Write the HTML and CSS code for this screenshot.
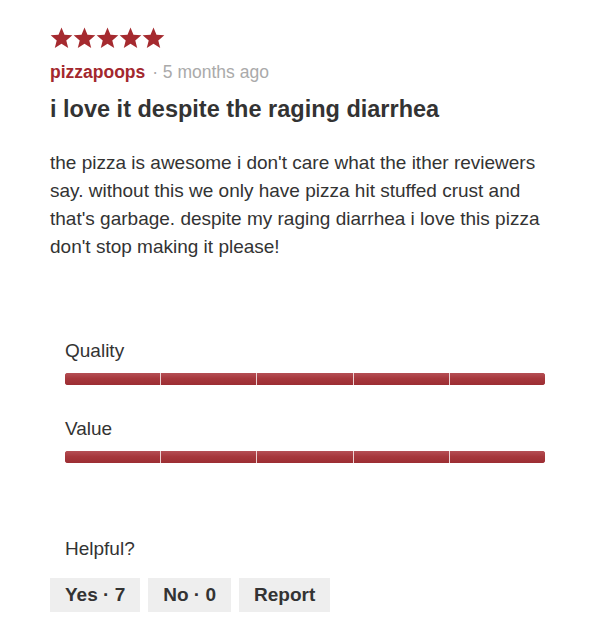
FILE: index.html
```html
<!DOCTYPE html>
<html>
<head>
    <title>Review</title>
    <link rel="stylesheet" href="styles.css">
</head>
<body>
    <div class="review">
        <!-- star rating -->
        <div class="stars">
            <svg viewBox="0 0 24 24"><path d="M12 1.5l3.1 7.6 8.2.6-6.3 5.3 2 8-7-4.4-7 4.4 2-8L.7 9.7l8.2-.6z"/></svg>
            <svg viewBox="0 0 24 24"><path d="M12 1.5l3.1 7.6 8.2.6-6.3 5.3 2 8-7-4.4-7 4.4 2-8L.7 9.7l8.2-.6z"/></svg>
            <svg viewBox="0 0 24 24"><path d="M12 1.5l3.1 7.6 8.2.6-6.3 5.3 2 8-7-4.4-7 4.4 2-8L.7 9.7l8.2-.6z"/></svg>
            <svg viewBox="0 0 24 24"><path d="M12 1.5l3.1 7.6 8.2.6-6.3 5.3 2 8-7-4.4-7 4.4 2-8L.7 9.7l8.2-.6z"/></svg>
            <svg viewBox="0 0 24 24"><path d="M12 1.5l3.1 7.6 8.2.6-6.3 5.3 2 8-7-4.4-7 4.4 2-8L.7 9.7l8.2-.6z"/></svg>
        </div>
        <div class="byline">
            <span class="author">pizzapoops</span>
            <span class="when">&middot; 5 months ago</span>
        </div>
        <h2 class="title">i love it despite the raging diarrhea</h2>
        <p class="body-text">the pizza is awesome i don't care what the ither reviewers say. without this we only have pizza hit stuffed crust and that's garbage. despite my raging diarrhea i love this pizza don't stop making it please!</p>

        <div class="ratings">
            <div class="rating">
                <div class="rating-label">Quality</div>
                <div class="bar">
                    <span></span><span></span><span></span><span></span><span></span>
                </div>
            </div>
            <div class="rating">
                <div class="rating-label">Value</div>
                <div class="bar">
                    <span></span><span></span><span></span><span></span><span></span>
                </div>
            </div>
        </div>

        <div class="helpful">Helpful?</div>
        <div class="actions">
            <button class="btn">Yes &middot; 7</button>
            <button class="btn">No &middot; 0</button>
            <button class="btn">Report</button>
        </div>
    </div>
</body>
</html>
```

FILE: styles.css
```css
body {
    margin: 0;
    padding: 0;
    background: #fff;
    font-family: "Liberation Sans", Arial, sans-serif;
    color: #333;
}

.review {
    padding: 26px 50px 0 50px;
}

/* stars */
.stars {
    display: flex;
    height: 24px;
}

.stars svg {
    width: 23px;
    height: 23px;
    fill: #a52a2f;
}

.byline {
    margin-top: 11px;
    font-size: 17.5px;
    line-height: 22px;
}

.author {
    color: #a3282e;
    font-weight: bold;
}

.when {
    color: #aaa;
    margin-left: 2px;
}

.title {
    margin: 12px 0 0 0;
    font-size: 23.5px;
    line-height: 28px;
    font-weight: bold;
    color: #333;
}

.body-text {
    margin: 26px 0 0 0;
    font-size: 19px;
    line-height: 28px;
    color: #333;
}

/* rating bars */
.ratings {
    margin-top: 79px;
    padding-left: 15px;
}

.rating {
    margin-bottom: 33px;
}

.rating:last-child {
    margin-bottom: 0;
}

.rating-label {
    font-size: 19px;
    line-height: 22px;
}

.bar {
    display: flex;
    margin-top: 11px;
    width: 480px;
    height: 12px;
    border-radius: 3px;
    overflow: hidden;
    background: #a3343a;
}

.bar span {
    flex: 1;
    background: linear-gradient(#b54f55, #a7383d 45%, #9c2e33);
    border-left: 1px solid #ecd3d4;
}

.bar span:first-child {
    border-left: none;
}

.helpful {
    margin-top: 75px;
    padding-left: 15px;
    font-size: 19px;
    line-height: 22px;
}

.actions {
    display: flex;
    gap: 8px;
    margin-top: 18px;
}

.btn {
    background: #eee;
    border: none;
    border-radius: 0;
    height: 34px;
    padding: 0 15px;
    font-family: "Liberation Sans", Arial, sans-serif;
    font-size: 19px;
    font-weight: bold;
    color: #333;
}
```
